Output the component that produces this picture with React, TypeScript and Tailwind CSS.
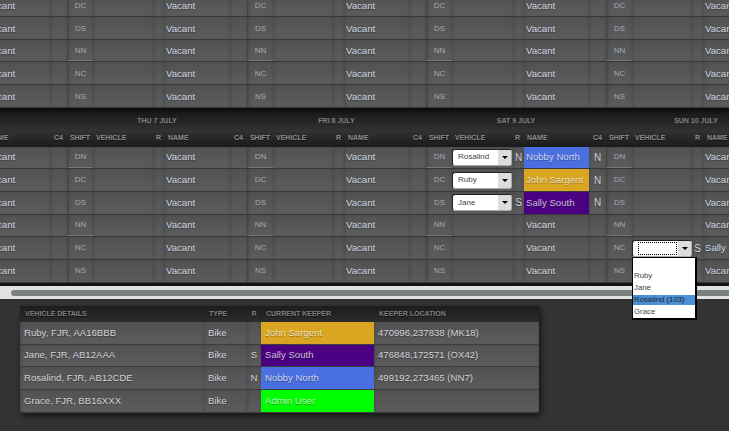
type Fill = { name: string; color: string; r?: string; c4?: string; vehicle?: string };

const SHIFTS = ["DN", "DC", "DS", "NN", "NC", "NS"];
const DAYS = ["THU 7 JULY", "FRI 8 JULY", "SAT 9 JULY", "SUN 10 JULY"];
const cellBg = "bg-gradient-to-b from-[#525252] to-[#5c5c5c] shadow-[inset_2px_0_3px_-1px_rgba(0,0,0,0.16),inset_-2px_0_3px_-1px_rgba(0,0,0,0.08)]";
const shadowText = "[text-shadow:0_1px_1px_rgba(0,0,0,0.35)]";

const saturday: Record<string, Fill> = {
  DN: { name: "Nobby North", color: "bg-[#4a6fe0]", r: "N", c4: "N", vehicle: "Rosalind" },
  DC: { name: "John Sargent", color: "bg-[#daa520]", c4: "N", vehicle: "Ruby" },
  DS: { name: "Sally South", color: "bg-[#4b0082]", r: "S", c4: "N", vehicle: "Jane" },
};

const sallyOnSunday: Fill = { name: "Sally South", color: "", r: "S", vehicle: "" };

function VehicleSelect({ label, focused }: { label: string; focused?: boolean }) {
  return (
    <div className="flex h-[17px] w-[60px] shrink-0 items-stretch overflow-hidden rounded-[3px] border border-[#222] border-r-[#aaa] border-b-[#aaa] bg-white">
      <div className="m-px flex flex-1 items-center pl-1 text-[8px] text-[#444]">
        {focused ? <div className="h-full w-full border border-dotted border-black" /> : label}
      </div>
      <div className="flex w-[13px] items-center justify-center bg-[#dcdcdc]">
        <div className="h-0 w-0 border-x-[3px] border-t-[3px] border-x-transparent border-t-black" />
      </div>
    </div>
  );
}

function DayCells({ shift, fill, width, wide, focused, nudge }: { shift: string; fill?: Fill; width: string; wide?: boolean; focused?: boolean; nudge?: boolean }) {
  const lined = shift === "DN" || shift === "NN";
  const pad = nudge ? "pt-[2px]" : "";
  return (
    <div className={`flex h-full shrink-0 ${width}`}>
      <div className={`flex w-[26px] shrink-0 items-center justify-center border-l border-l-[#444] text-[8px] text-[#a0abb6] ${cellBg} ${pad} ${lined ? "border-b border-b-[#777]" : ""}`}>
        {shift}
      </div>
      <div className={`flex shrink-0 items-center ${wide ? "w-[61px]" : "w-[60px]"} ${cellBg}`}>
        {fill?.vehicle !== undefined && <VehicleSelect label={fill.vehicle} focused={focused} />}
      </div>
      <div className={`flex w-[11px] shrink-0 items-center justify-center text-[10px] text-[#d0d4d8] ${cellBg} ${shadowText}`}>{fill?.r}</div>
      <div className={`flex min-w-0 flex-1 items-center overflow-hidden whitespace-nowrap pl-[2px] text-[9.6px] ${pad} ${fill && !focused ? `${fill.color} text-white/75` : `${cellBg} text-[#d2d9e2]`} ${shadowText}`}>
        {fill?.name ?? "Vacant"}
      </div>
      <div className={`flex w-[17px] shrink-0 items-center justify-center text-[10px] text-[#d0d4d8] ${cellBg} ${shadowText}`}>{fill?.c4}</div>
    </div>
  );
}

function RosterRow({ shift, editing, first }: { shift: string; editing?: boolean; first?: boolean }) {
  return (
    <div className={`flex border-b border-[#383838] ${first ? "h-[17px] items-end" : "h-[22.67px]"}`}>
      <div className={`-ml-[113px] flex ${first ? "h-[21.67px] shrink-0" : "h-full"}`}>
        <DayCells nudge={!editing} shift={shift} width="w-[180px]" />
        <DayCells nudge={!editing} shift={shift} width="w-[180px]" />
        <DayCells nudge={!editing} shift={shift} width="w-[179px]" />
        <DayCells nudge={!editing} shift={shift} width="w-[180px]" wide fill={editing ? saturday[shift] : undefined} />
        <DayCells
          nudge={!editing}
          shift={shift}
          width="w-[180px]"
          focused={editing && shift === "NC"}
          fill={editing && shift === "NC" ? sallyOnSunday : undefined}
        />
      </div>
    </div>
  );
}

function HeaderLabels({ width }: { width: string }) {
  return (
    <div className={`flex shrink-0 items-center text-[7px] font-bold text-[#8e8e8e] [text-shadow:0_1px_0_rgba(0,0,0,0.6)] ${width}`}>
      <div className="w-[26px] shrink-0 text-center">SHIFT</div>
      <div className="w-[60px] shrink-0 pl-[3px]">VEHICLE</div>
      <div className="w-[11px] shrink-0 text-center">R</div>
      <div className="min-w-0 flex-1 pl-1">NAME</div>
      <div className="w-[17px] shrink-0 text-center">C4</div>
    </div>
  );
}

function RosterHeader() {
  return (
    <div>
      <div className="h-[6px] bg-gradient-to-b from-[#0c0c0c] to-[#1a1a1a]" />
      <div className="-ml-[113px] flex h-[16px] bg-gradient-to-b from-[#1c1c1c] to-[#303030]">
        {["", ...DAYS].map((day, i) => (
          <div key={i} className={`flex shrink-0 items-center justify-center text-[7px] font-bold text-[#808080] ${i === 2 ? "w-[179px]" : "w-[180px]"}`}>
            {day}
          </div>
        ))}
      </div>
      <div className="-ml-[113px] flex h-[17px] bg-gradient-to-b from-[#333333] to-[#1b1b1b]">
        <HeaderLabels width="w-[180px]" />
        <HeaderLabels width="w-[180px]" />
        <HeaderLabels width="w-[179px]" />
        <HeaderLabels width="w-[180px]" />
        <HeaderLabels width="w-[180px]" />
      </div>
    </div>
  );
}

const vehicles = [
  { details: "Ruby, FJR, AA16BBB", r: "", keeper: "John Sargent", color: "bg-[#daa520]", location: "470996,237838 (MK18)" },
  { details: "Jane, FJR, AB12AAA", r: "S", keeper: "Sally South", color: "bg-[#4b0082]", location: "476848,172571 (OX42)" },
  { details: "Rosalind, FJR, AB12CDE", r: "N", keeper: "Nobby North", color: "bg-[#4a6fe0]", location: "499192,273465 (NN7)" },
  { details: "Grace, FJR, BB16XXX", r: "", keeper: "Admin User", color: "bg-[#00ff00]", location: "" },
];

function VehicleTable() {
  const head = "flex items-center pl-[5px] text-[7px] font-bold text-[#808080] [text-shadow:0_1px_0_rgba(0,0,0,0.6)]";
  const body = `flex items-center pl-[4px] text-[9.6px] ${shadowText}`;
  return (
    <div className="ml-5 mt-[7px] w-[519px] overflow-hidden rounded-b-[3px] shadow-[2px_3px_6px_rgba(0,0,0,0.6)]">
      <div className="flex h-[16px] bg-gradient-to-b from-[#1d1d1d] to-[#2b2b2b]">
        <div className={`w-[184px] ${head}`}>VEHICLE DETAILS</div>
        <div className={`w-[43px] ${head}`}>TYPE</div>
        <div className={`w-[14px] justify-center ${head} !pl-0`}>R</div>
        <div className={`w-[113px] ${head}`}>CURRENT KEEPER</div>
        <div className={`w-[165px] ${head}`}>KEEPER LOCATION</div>
      </div>
      {vehicles.map((v) => (
        <div key={v.details} className="flex h-[22.67px] border-b border-[#3c3c3c]">
          <div className={`w-[184px] text-[#d0d4da] ${cellBg} ${body}`}>{v.details}</div>
          <div className={`w-[43px] text-[#d0d4da] ${cellBg} ${body}`}>Bike</div>
          <div className={`w-[14px] justify-center text-[#d0d4da] ${cellBg} ${body} !pl-0`}>{v.r}</div>
          <div className={`w-[113px] text-white/75 ${v.color} ${body}`}>{v.keeper}</div>
          <div className={`w-[165px] text-[#d0d4da] ${cellBg} ${body}`}>{v.location}</div>
        </div>
      ))}
    </div>
  );
}

export default function App() {
  return (
    <div className="relative h-[431px] w-[729px] overflow-hidden bg-[#333333] font-['Liberation_Sans',Arial,sans-serif]">
      <div className="h-[286px] overflow-hidden bg-[#141414]">
        {SHIFTS.slice(1).map((s, i) => (
          <RosterRow key={s} shift={s} first={i === 0} />
        ))}
        <RosterHeader />
        {SHIFTS.map((s) => (
          <RosterRow key={s} shift={s} editing />
        ))}
      </div>

      {/* horizontal scrollbar */}
      <div className="h-[13px] border-t-4 border-b-[3px] border-[#e2e2e2] bg-[#e2e2e2]">
        <div className="ml-[11px] h-full rounded-l-full bg-[#7a7f7f]" />
      </div>

      <VehicleTable />

      {/* open select list */}
      <div className="absolute left-[632px] top-[257px] w-[65px] border border-r-2 border-b-2 border-black bg-white pt-[12px] text-[7.8px] leading-[12px] text-[#444]">
        <div className="pl-px">Ruby</div>
        <div className="pl-px">Jane</div>
        <div className="my-px h-[10px] bg-[#4a90d9] pl-px leading-[10px] text-[#222]">Rosalind (103)</div>
        <div className="pl-px">Grace</div>
      </div>
    </div>
  );
}
